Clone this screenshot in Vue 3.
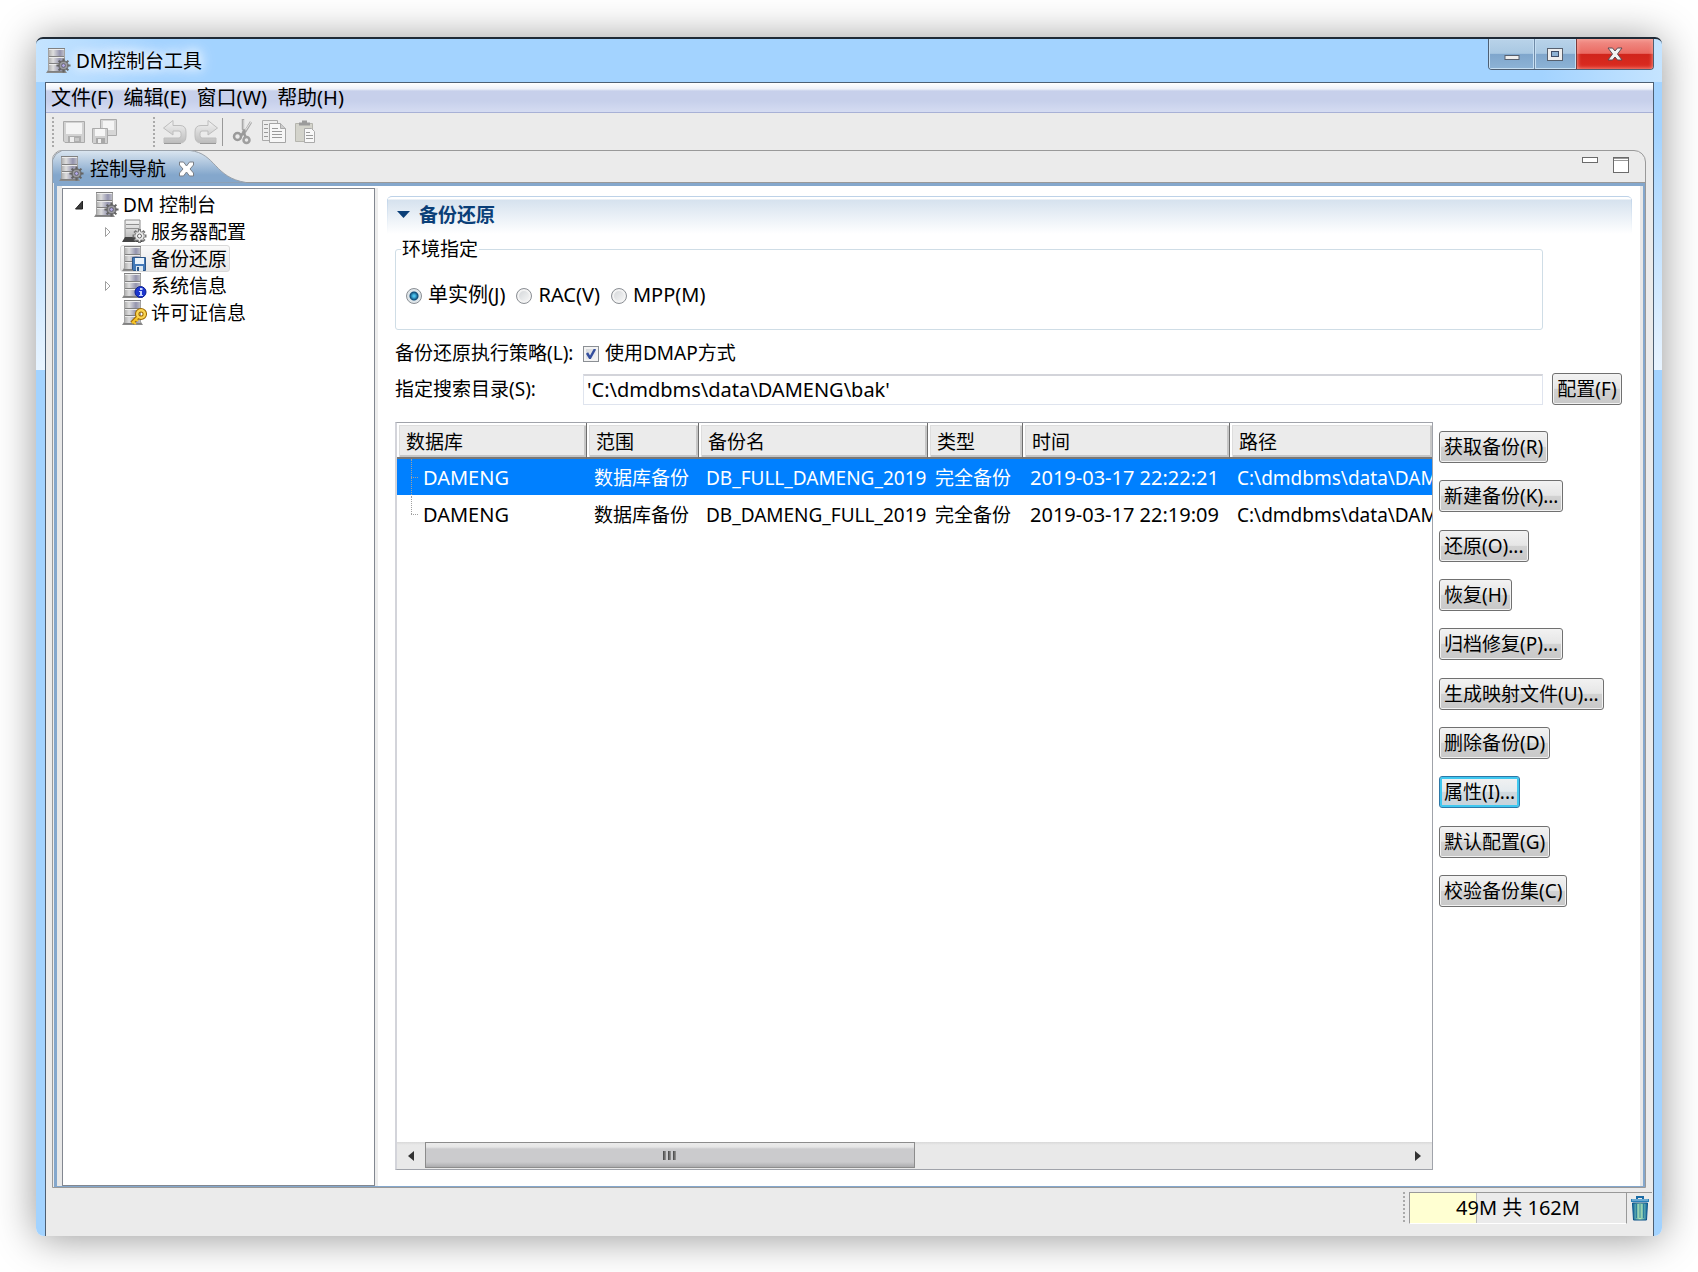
<script setup>
import { ref } from 'vue'

const menus = ['文件(F)', '编辑(E)', '窗口(W)', '帮助(H)']

const tree = [
  { label: 'DM 控制台', icon: 'server-gear', level: 0, state: 'open' },
  { label: '服务器配置', icon: 'server-config', level: 1, state: 'closed' },
  { label: '备份还原', icon: 'server-disk', level: 1, state: 'leaf', selected: true },
  { label: '系统信息', icon: 'server-info', level: 1, state: 'closed' },
  { label: '许可证信息', icon: 'server-key', level: 1, state: 'leaf' },
]

const environments = [
  { value: 'single', label: '单实例(J)' },
  { value: 'rac', label: 'RAC(V)' },
  { value: 'mpp', label: 'MPP(M)' },
]
const environment = ref('single')
const useDmap = ref(true)
const searchDir = ref("'C:\\dmdbms\\data\\DAMENG\\bak'")

const columns = [
  { title: '数据库', cls: 'c-db' },
  { title: '范围', cls: 'c-scope' },
  { title: '备份名', cls: 'c-name' },
  { title: '类型', cls: 'c-type' },
  { title: '时间', cls: 'c-time' },
  { title: '路径', cls: 'c-path' },
]
const rows = [
  { db: 'DAMENG', scope: '数据库备份', name: 'DB_FULL_DAMENG_2019', type: '完全备份', time: '2019-03-17 22:22:21', path: 'C:\\dmdbms\\data\\DAM' },
  { db: 'DAMENG', scope: '数据库备份', name: 'DB_DAMENG_FULL_2019', type: '完全备份', time: '2019-03-17 22:19:09', path: 'C:\\dmdbms\\data\\DAM' },
]
const selectedRow = ref(0)

const actions = [
  '获取备份(R)', '新建备份(K)...', '还原(O)...', '恢复(H)', '归档修复(P)...',
  '生成映射文件(U)...', '删除备份(D)', '属性(I)...', '默认配置(G)', '校验备份集(C)',
]
const focusedAction = '属性(I)...'
</script>

<template>
  <div class="desktop">
    <svg class="sprite" aria-hidden="true">
      <defs>
        <linearGradient id="metal" x1="0" x2="1">
          <stop offset="0" stop-color="#a8a8a8" />
          <stop offset=".3" stop-color="#dedede" />
          <stop offset=".7" stop-color="#9494ae" />
          <stop offset="1" stop-color="#c6c6cc" />
        </linearGradient>
        <linearGradient id="grayDown" x1="0" y1="0" x2="0" y2="1">
          <stop offset="0" stop-color="#f4f4f4" />
          <stop offset="1" stop-color="#bcbcbc" />
        </linearGradient>
        <linearGradient id="tabFill" x1="0" y1="0" x2="0" y2="1">
          <stop offset="0" stop-color="#dbe6f0" />
          <stop offset=".75" stop-color="#84a7cc" />
          <stop offset="1" stop-color="#84a7cc" />
        </linearGradient>
        <linearGradient id="binFill" x1="0" x2="1">
          <stop offset="0" stop-color="#0d6aa4" />
          <stop offset=".5" stop-color="#b9ecb4" />
          <stop offset="1" stop-color="#0d6aa4" />
        </linearGradient>
      </defs>
      <symbol id="server" viewBox="0 0 24 25">
        <path d="M2 22h17l2 3H0z" fill="#8a8a8a" />
        <rect x="2" y="1" width="17" height="7" fill="url(#metal)" />
        <rect x="2" y="9" width="17" height="6" fill="url(#metal)" />
        <rect x="2" y="16" width="17" height="7" fill="url(#metal)" />
        <path d="M2 1.500h17M2 9.500h17M2 16.500h17" stroke="#ececec" />
        <path d="M2 .500h17M2 8.500h17M2 15.500h17M2 23.500h17" stroke="#808080" />
        <path d="M2.500 1v22M18.500 1v22" stroke="#a2a2a2" />
      </symbol>
      <symbol id="gear" viewBox="-8 -8 16 16">
        <circle r="5" fill="#8c8c8c" stroke="#5f5f5f" />
        <path d="M0-7.500V7.500M-7.500 0H7.500M-5.200-5.200 5.200 5.200M5.200-5.200-5.200 5.200" stroke="#636363" stroke-width="2.200" />
        <circle r="4" fill="#9b9ba0" />
        <circle r="2" fill="#b5abec" stroke="#5f5f6c" />
      </symbol>
      <symbol id="server-gear" viewBox="0 0 25 25">
        <use href="#server" width="24" height="25" />
        <use href="#gear" x="10" y="10" width="15" height="15" />
      </symbol>
      <symbol id="server-config" viewBox="0 0 25 25">
        <path d="M3 1h15v18H3z" fill="url(#grayDown)" stroke="#8a8a8a" />
        <path d="M4 5.500h13M4 9.500h13" stroke="#909090" />
        <path d="M3 18h15l3 5H0z" fill="#444" />
        <g transform="translate(17.500 17)">
          <path d="M0-7V7M-7 0H7M-5-5 5 5M5-5-5 5" stroke="#777" stroke-width="3" />
          <circle r="4.500" fill="#ededed" stroke="#888" />
          <path d="M0-5.500V5.500M-5.500 0H5.500M-4-4 4 4M4-4-4 4" stroke="#ededed" />
          <circle r="2" fill="#fff" stroke="#666" />
        </g>
      </symbol>
      <symbol id="server-disk" viewBox="0 0 25 25">
        <use href="#server" width="24" height="25" />
        <path d="M10.500 11.500h13v13h-12l-1-1z" fill="#4379b8" stroke="#2c5688" />
        <path d="M13 12h9v6h-9z" fill="#eaf3fb" />
        <path d="M14 20h7v5h-7z" fill="#dbe8f2" />
        <path d="M15 21h2v4h-2z" fill="#2c5688" />
      </symbol>
      <symbol id="server-info" viewBox="0 0 25 25">
        <use href="#server" width="24" height="25" />
        <circle cx="18.500" cy="19" r="5.500" fill="#1c36cf" stroke="#0b1f8f" />
        <path d="M18 15h2.500v2H18zM17 18h3v4h1v1h-4v-1h1v-3h-1z" fill="#c9d6ff" />
      </symbol>
      <symbol id="server-key" viewBox="0 0 25 25">
        <use href="#server" width="24" height="25" />
        <path d="m17 16-7 7" stroke="#a06a00" stroke-width="4.500" />
        <circle cx="19" cy="14" r="3.800" fill="none" stroke="#a06a00" stroke-width="4.500" />
        <path d="m17 16-7 7m1-1 3 2m-1-5 3 2" stroke="#f7c52a" stroke-width="2" />
        <circle cx="19" cy="14" r="3.800" fill="none" stroke="#fbd653" stroke-width="2.400" />
      </symbol>
    </svg>

    <div class="window">
      <header class="titlebar">
        <svg class="ico"><use href="#server-gear" /></svg>
        <h1>DM控制台工具</h1>
        <div class="winbtns">
          <button class="wb wb-min" aria-label="最小化">
            <svg width="16" height="8"><rect x="1" y="1.500" width="14" height="4" fill="#eee" stroke="#57606e" /></svg>
          </button>
          <button class="wb wb-max" aria-label="最大化">
            <svg width="17" height="15"><rect x=".5" y="1.500" width="15" height="12" fill="#eee" stroke="#57606e" /><rect x="4.500" y="4.500" width="7" height="5" fill="#8eb2d3" stroke="#3f4d66" /></svg>
          </button>
          <button class="wb wb-close" aria-label="关闭">
            <svg width="16" height="14"><path d="M1 1h4.500L8 4l2.500-3H15l-4.500 6 4.500 6h-4.500L8 10l-2.500 3H1l4.500-6z" fill="#f1f1f1" stroke="#5c4a52" /></svg>
          </button>
        </div>
      </header>

      <div class="client">
        <nav class="menubar">
          <a v-for="m in menus" :key="m" href="#">{{ m }}</a>
        </nav>

        <div class="toolbar">
          <i class="handle"></i>
          <button aria-label="保存">
            <svg width="24" height="24"><path d="M1.500 1.500h21v21H3l-1.500-1.500z" fill="#d2d2d2" stroke="#aaa" /><path d="M4 3h16v11H4z" fill="#f4f4f4" /><path d="M6 16h13v6H6z" fill="#aeaeae" /><path d="M8 17h4v5H8z" fill="#eee" /><path d="M13 18h4v3h-4z" fill="#c8c8c8" /></svg>
          </button>
          <button aria-label="全部保存">
            <svg width="28" height="27"><g><path d="M9.500 1.500h16v16h-16z" fill="#d6d6d6" stroke="#aaa" /><path d="M12 3h11v9H12z" fill="#f4f4f4" /></g><path d="M1.500 10.500h15v15h-14l-1-1z" fill="#cfcfcf" stroke="#aaa" /><path d="M4 11h10v7H4z" fill="#f6f6f6" /><path d="M5 20h9v5H5z" fill="#a8a8a8" /><path d="M7 21h3v4H7z" fill="#eee" /></svg>
          </button>
          <i class="handle far"></i>
          <button aria-label="撤销">
            <svg width="26" height="26"><path d="M1.500 9 11 1.500v5h7q6 0 6 6.500v4q0 7-6 7H2v-5h15q2 0 2-2.500v-2q0-2.500-2-2.500h-6v4z" fill="url(#grayDown)" stroke="#bdbdbd" /><path d="M2 24.500h17" stroke="#999" /></svg>
          </button>
          <button aria-label="重做">
            <svg width="26" height="26"><path d="M24.500 9 15 1.500v5H8q-6 0-6 6.500v4q0 7 6 7h15v-5H9q-2 0-2-2.500v-2Q7 12 9 12h6v4z" fill="url(#grayDown)" stroke="#bdbdbd" /><path d="M7 24.500h16" stroke="#999" /></svg>
          </button>
          <i class="sep"></i>
          <button aria-label="剪切">
            <svg width="22" height="27"><path d="M11 1v10l2 3L19 4" fill="none" stroke="#a9a9a9" stroke-width="2.500" /><path d="M12 2v9M19 4l-6 9" stroke="#e8e8e8" /><path d="m13 12-4 6M11 13l3 7" stroke="#9a9a9a" stroke-width="2.500" /><circle cx="5.500" cy="18.500" r="3.500" fill="none" stroke="#9a9a9a" stroke-width="2.500" /><circle cx="14.500" cy="22" r="3" fill="none" stroke="#9f9f9f" stroke-width="2.500" /></svg>
          </button>
          <button aria-label="复制">
            <svg width="26" height="25"><path d="M1.500 1.500h15v20h-15z" fill="#eee" stroke="#aaa" /><path d="M3 5.500h4M3 9.500h4M3 13.500h4M3 17.500h4" stroke="#999" /><path d="M8.500 4.500h11l5 5v14h-16z" fill="#f7f7f7" stroke="#a5a5a5" /><path d="M19.500 4.500v5h5" fill="#ccc" stroke="#aaa" /><path d="M11 9.500h6M11 12.500h10M11 15.500h10M11 18.500h10" stroke="#9a9a9a" /></svg>
          </button>
          <button aria-label="粘贴">
            <svg width="22" height="25"><path d="M1.500 4.500h17v18h-17z" fill="#d3d3cb" stroke="#b5b5ae" /><path d="M5 6.500V3.500h3v-2h5v2h3v3z" fill="#9b9b9b" /><path d="M10.500 9.500h7l3 3v11h-10z" fill="#f8f8f8" stroke="#aaa" /><path d="M12 13.500h4M12 16.500h7M12 19.500h7" stroke="#9a9a9a" /></svg>
          </button>
        </div>

        <main class="folder">
          <div class="folder-head">
            <div class="tab">
              <svg class="tab-shape" viewBox="0 0 194 33" preserveAspectRatio="none"><path d="M0 33V10L3 4 10 .500h128c26 3 24 27 56 32z" fill="url(#tabFill)" /><path d="M.500 33V10L4 4l6-3.500h128c26 3 24 27 56 32" fill="none" stroke="#9aa2ab" /></svg>
              <svg class="ico"><use href="#server-gear" /></svg>
              <span>控制导航</span>
              <button aria-label="关闭标签">
                <svg width="17" height="16"><path d="M1.500 1h4l3 4 3-4h4v3l-3.500 4 3.500 4v3h-4l-3-4-3 4h-4v-3L5 8 1.500 4z" fill="#fff" stroke="#7a7f86" /></svg>
              </button>
            </div>
            <div class="folder-tools">
              <button aria-label="最小化视图"><svg width="16" height="16"><rect x=".5" y=".5" width="15" height="5" fill="#fff" stroke="#6b6b6b" /></svg></button>
              <button aria-label="最大化视图"><svg width="16" height="16"><rect x=".5" y=".5" width="15" height="15" fill="#fff" stroke="#6b6b6b" /><path d="M1 1.500h14M1 3.500h14" stroke="#999" /></svg></button>
            </div>
          </div>

          <div class="pane">
            <ul class="tree">
              <li v-for="n in tree" :key="n.label" :class="['lv' + n.level]">
                <svg class="twist" width="12" height="12">
                  <path v-if="n.state === 'open'" d="M8.500 2v8h-7z" fill="#3b3b3b" stroke="#222" />
                  <path v-else-if="n.state === 'closed'" d="M3.500 1.500 8 6l-4.500 4.500z" fill="#fff" stroke="#a0a0a0" />
                </svg>
                <span class="node" :class="{ selected: n.selected }">
                  <svg class="ico"><use :href="'#' + n.icon" /></svg>
                  <span>{{ n.label }}</span>
                </span>
              </li>
            </ul>

            <section class="form">
              <h2><svg width="14" height="8"><path d="M0 0h13L6.500 7z" fill="#0b3f78" /></svg>备份还原</h2>

              <div class="body">
                <fieldset>
                  <legend>环境指定</legend>
                  <label v-for="e in environments" :key="e.value">
                    <input v-model="environment" type="radio" name="env" :value="e.value" />{{ e.label }}
                  </label>
                </fieldset>

                <div class="line strategy">
                  <span class="cap">备份还原执行策略(L):</span>
                  <label><input v-model="useDmap" type="checkbox" />使用DMAP方式</label>
                </div>

                <div class="line dir">
                  <label class="cap" for="dir">指定搜索目录(S):</label>
                  <input id="dir" v-model="searchDir" type="text" />
                  <button class="btn">配置(F)</button>
                </div>

                <div class="work">
                  <div class="grid">
                    <table>
                      <thead>
                        <tr><th v-for="c in columns" :key="c.cls" :class="c.cls">{{ c.title }}</th></tr>
                      </thead>
                      <tbody>
                        <tr v-for="(r, i) in rows" :key="i" :class="{ on: i === selectedRow, last: i === rows.length - 1 }" @click="selectedRow = i">
                          <td class="latin first">{{ r.db }}</td>
                          <td>{{ r.scope }}</td>
                          <td>{{ r.name }}</td>
                          <td>{{ r.type }}</td>
                          <td class="latin">{{ r.time }}</td>
                          <td>{{ r.path }}</td>
                        </tr>
                      </tbody>
                    </table>
                    <div class="hscroll">
                      <button aria-label="向左"><svg width="6" height="10"><path d="M6 0v10L0 5z" fill="#333" /></svg></button>
                      <div class="track"><div class="thumb"><i></i><i></i><i></i></div></div>
                      <button aria-label="向右"><svg width="6" height="10"><path d="M0 0v10l6-5z" fill="#333" /></svg></button>
                    </div>
                  </div>
                  <div class="actions">
                    <button v-for="a in actions" :key="a" class="btn" :class="{ focused: a === focusedAction }">{{ a }}</button>
                  </div>
                </div>
              </div>
            </section>
          </div>
        </main>

        <footer class="status">
          <i class="handle"></i>
          <div class="heap"><span>49M 共 162M</span></div>
          <button aria-label="回收内存">
            <svg width="20" height="25"><path d="M7 3V1h6v2" fill="none" stroke="#1a6ba5" stroke-width="2" /><path d="M1 3h18v3H1z" fill="#2b7fb8" /><path d="M2 4h16" stroke="#a6d4ea" /><path d="M2.500 7h15l-1 17h-13z" fill="url(#binFill)" stroke="#0b5288" /><path d="M6.500 8v14M10 8v14M13.500 8v14" stroke="#2a7f9f" /></svg>
          </button>
        </footer>
      </div>
    </div>
  </div>
</template>

<style>
body {
  margin: 0;
  background: #fff;
}
</style>

<style scoped>
* {
  box-sizing: border-box;
}
.desktop {
  min-height: 100vh;
  padding: 37px 36px 36px;
  display: flex;
  overflow: hidden;
  font: 19px/26px "Noto Sans", "Noto Sans CJK SC", sans-serif;
  color: #000;
}
.sprite {
  position: absolute;
  width: 0;
  height: 0;
}
button {
  font: inherit;
  color: inherit;
  padding: 0;
  border: 0;
  background: none;
  display: flex;
  align-items: center;
  justify-content: center;
}
svg {
  flex: none;
  display: block;
}
.ico {
  width: 25px;
  height: 25px;
}

/* window frame */
.window {
  flex: 1;
  min-width: 0;
  display: flex;
  flex-direction: column;
  padding: 0 8px 0 9px;
  border-top: 2px solid #1f2a36;
  border-radius: 7px 7px 8px 8px;
  background:
    linear-gradient(90deg, #c5e4ff, #a3d3ff00 120px, #a3d3ff00 calc(100% - 120px), #c5e4ff) 0 0 / 100% 43px no-repeat,
    linear-gradient(#a3d3ff 0 90px, #e8f4ff 331px, #a3d3ff 331px);
  box-shadow: 0 2px 40px rgba(0, 0, 0, 0.42);
}
.titlebar {
  height: 43px;
  display: flex;
  align-items: center;
}
.titlebar .ico {
  margin-left: 1px;
}
h1 {
  margin: 0 0 0 5px;
  font-size: 19px;
  font-weight: 400;
  text-shadow: 0 0 10px #fff, 0 0 14px #fff, 0 0 18px #fff;
}
.winbtns {
  margin-left: auto;
  align-self: flex-start;
  display: flex;
  height: 31px;
  border: 1px solid #4e5f73;
  border-top: 0;
  border-radius: 0 0 4px 4px;
  overflow: hidden;
}
.wb {
  width: 45px;
  background: linear-gradient(#b9d3e9, #a9c8e2 48%, #7fa6cc 50%, #8db3d6);
  box-shadow: inset 0 0 0 1px #c6dff3;
}
.wb-max {
  width: 42px;
  border-left: 1px solid #6f8ba8;
}
.wb-min svg {
  margin-top: 8px;
}
.wb-close {
  width: 77px;
  border-left: 1px solid #7b3a3a;
  background: linear-gradient(#f1918a, #ea6a62 48%, #d0241b 50%, #dc2c20);
  box-shadow: inset 0 0 4px #f9b0a4;
}
.client {
  flex: 1;
  display: flex;
  flex-direction: column;
  background: #ebebeb;
  border: 1px solid #4d5f73;
  border-bottom: 0;
}

/* menu and toolbar */
.menubar {
  height: 30px;
  display: flex;
  gap: 10px;
  padding-left: 5px;
  align-items: center;
  font-size: 20px;
  border-bottom: 1px solid #a8b1d6;
  background: linear-gradient(#fff, #eef1f9 6px, #c7d0eb 8px, #c7d0eb 18px, #d5dcf2);
}
.menubar a {
  color: #000;
  text-decoration: none;
}
.toolbar {
  height: 37px;
  display: flex;
  align-items: center;
  padding-left: 6px;
}
.toolbar button {
  width: 31px;
}
.handle {
  width: 2px;
  height: 30px;
  margin-right: 4px;
  background: repeating-linear-gradient(#aaa 0 2px, #ebebeb 2px 4px);
}
.far {
  margin-left: 33px;
}
.sep {
  width: 1px;
  height: 28px;
  margin: 0 4px 0 1px;
  background: #999;
}

/* tab folder */
.folder {
  flex: 1;
  display: flex;
  flex-direction: column;
  margin: 0 7px 0 6px;
  border: 1px solid #999;
  border-radius: 10px 12px 0 0;
}
.folder-head {
  height: 32px;
  display: flex;
  justify-content: space-between;
  border-bottom: 1px solid #999;
}
.tab {
  position: relative;
  width: 194px;
  height: 33px;
  margin: -1px 0 0 -1px;
  padding: 4px 0 0 7px;
  display: flex;
  align-items: center;
  gap: 6px;
}
.tab > * {
  position: relative;
}
.tab .tab-shape {
  position: absolute;
  inset: 0;
  width: 100%;
  height: 100%;
}
.tab button {
  margin-left: 6px;
}
.folder-tools {
  display: flex;
  gap: 15px;
  align-items: flex-start;
  padding: 6px 16px 0 0;
}
.pane {
  flex: 1;
  display: flex;
  margin-left: 1px;
  border: solid #84a7cc;
  border-width: 3px 2px 1px 3px;
  background: linear-gradient(90deg, #e8e8e8 5px, #fff 5px calc(100% - 3px), #e8e8e8 calc(100% - 3px));
}
.tree {
  width: 313px;
  margin: 2px 0 0 5px;
  padding: 2px 0;
  list-style: none;
  border: 1px solid #828790;
  background: #fff;
  box-shadow: 3px 0 #ededed;
}
.tree li {
  display: flex;
  align-items: center;
  height: 27px;
  padding-left: 11px;
}
.tree .lv1 {
  padding-left: 39px;
}
.twist {
  margin-right: 6px;
}
.node {
  display: flex;
  gap: 4px;
  align-items: center;
  height: 27px;
  padding: 0 2px 0 1px;
  border: 1px solid transparent;
}
.node.selected {
  border-color: #d9d9d9;
  border-radius: 3px;
  background: linear-gradient(#fafafa, #e6e6e6);
}

/* form */
.form {
  flex: 1;
  min-width: 0;
  display: flex;
  flex-direction: column;
  margin: 10px 11px 0 12px;
}
h2 {
  height: 38px;
  margin: 0;
  padding: 0 0 2px 10px;
  display: flex;
  align-items: center;
  gap: 8px;
  font-size: 19px;
  font-weight: 700;
  color: #0b3f78;
  border-radius: 5px 5px 0 0;
  border-top: 1px solid #bdd2e8;
  background:
    linear-gradient(#bdd2e8, #fff) 0 0 / 1px 100% no-repeat,
    linear-gradient(#bdd2e8, #fff) 100% 0 / 1px 100% no-repeat,
    linear-gradient(#fff 2px, #d6e2ee 3px, #fff);
}
.body {
  flex: 1;
  display: flex;
  flex-direction: column;
  padding: 2px 10px 16px 8px;
}
fieldset {
  height: 94px;
  margin: 0 79px 0 0;
  padding: 20px 10px 0;
  border: 1px solid #cfdde6;
  border-radius: 3px;
}
legend {
  padding: 0 1px;
  margin-left: -5px;
}
fieldset label {
  margin-right: 11px;
  font-size: 20px;
}
input[type="radio"],
input[type="checkbox"] {
  appearance: none;
  width: 16px;
  height: 16px;
  margin: 0 6px 0 0;
  vertical-align: -2px;
  border: 1px solid #8b8f94;
  background: linear-gradient(135deg, #d0d3d6, #fafafa);
  box-shadow: inset 0 0 0 2px #f3f3f3;
}
input[type="radio"] {
  border-radius: 50%;
}
input[type="radio"]:checked {
  background: radial-gradient(circle at 50% 50%, #4cc3ee 0 1px, #0d4a77 4px, #dfe6ea 5px);
  box-shadow: none;
}
input[type="checkbox"]:checked {
  background:
    url("data:image/svg+xml,%3Csvg xmlns='http://www.w3.org/2000/svg' width='14' height='14'%3E%3Cpath d='M3 6l3 5 5-9' fill='none' stroke='%23354f9e' stroke-width='2.500'/%3E%3C/svg%3E"),
    linear-gradient(135deg, #d0d3d6, #fafafa);
}
.line {
  display: flex;
  align-items: center;
}
.strategy {
  height: 26px;
  margin-top: 10px;
}
.cap {
  width: 188px;
}
.dir {
  margin-top: 7px;
}
.dir input {
  flex: 1;
  min-width: 0;
  height: 31px;
  padding: 0 3px;
  font: inherit;
  color: inherit;
  font-size: 20px;
  border: 1px solid #dfe4ee;
  border-top: 2px solid #d3d4da;
  outline: 0;
}
.btn {
  height: 32px;
  padding: 0 4px;
  border: 1px solid #707070;
  border-radius: 3px;
  background: linear-gradient(#f2f2f2, #e6e6e6 48%, #d2d2d2 50%, #c8c8c8);
  box-shadow: inset 0 0 0 1px #f2f2f2;
  white-space: nowrap;
}
.btn.focused {
  border-color: #2d78a8;
  background: linear-gradient(#f2f2f2, #e4eaee 48%, #d0d9df 50%, #c6d2da);
  box-shadow: inset 0 0 0 2px #3fc8f0;
}
.dir .btn {
  width: 70px;
  margin-left: 9px;
}

/* backup table */
.work {
  flex: 1;
  display: flex;
  margin-top: 17px;
}
.grid {
  flex: 1;
  min-width: 0;
  display: flex;
  flex-direction: column;
  justify-content: space-between;
  border: 1px solid #a0a3aa;
  border-left: 2px solid #d3d4da;
  background: #fff;
}
table {
  width: 100%;
  table-layout: fixed;
  border-collapse: separate;
  border-spacing: 0;
}
th {
  height: 36px;
  padding: 4px 0 0 9px;
  text-align: left;
  font-weight: 400;
  background: #ebebeb;
  border-right: 1px solid #6d6d6d;
  border-bottom: 2px solid #777;
  box-shadow: inset 2px 2px #fff, inset 3px 3px #ddd, inset -2px -2px #c6c6c6;
}
th:last-child {
  border-right: 0;
}
.c-db { width: 190px; }
.c-scope { width: 112px; }
.c-name { width: 229px; }
.c-type { width: 95px; }
.c-time { width: 207px; }
td {
  height: 37px;
  padding: 2px 0 0 7px;
  border-bottom: 1px solid #fff;
  white-space: nowrap;
  overflow: hidden;
}
.latin {
  font-size: 20px;
}
.on td {
  color: #fff;
  background: #0080ff padding-box;
}
.first {
  position: relative;
  padding-left: 26px;
}
.first::before,
.first::after {
  content: "";
  position: absolute;
  left: 14px;
  top: 0;
  height: 100%;
  border-left: 1px dotted #a0a0a0;
}
.first::after {
  top: 50%;
  width: 7px;
  height: 0;
  border-left: 0;
  border-top: 1px dotted #a0a0a0;
}
.last .first::before {
  height: 50%;
}
.hscroll {
  display: flex;
  height: 27px;
  background: linear-gradient(#d9d9d9, #e9e9e9 3px, #e9e9e9);
}
.hscroll button {
  width: 28px;
}
.track {
  flex: 1;
}
.thumb {
  width: 50%;
  height: 26px;
  display: flex;
  gap: 2px;
  align-items: center;
  justify-content: center;
  border: 1px solid #8c8c8c;
  background: linear-gradient(#ebebeb, #e6e6e6 4px, #cbcbcd 6px, #cbcbcd 19px, #ababad);
}
.thumb i {
  width: 3px;
  height: 9px;
  background: linear-gradient(90deg, #444, #999);
}
.actions {
  width: 189px;
  height: 476px;
  margin-top: 9px;
  padding-left: 6px;
  display: flex;
  flex-direction: column;
  align-items: flex-start;
  justify-content: space-between;
}

/* status bar */
.status {
  height: 48px;
  padding: 4px 1px 12px 0;
  display: flex;
  justify-content: flex-end;
}
.heap {
  width: 218px;
  border: 1px solid #999;
  border-bottom-color: #fff;
  display: flex;
  align-items: center;
  justify-content: center;
  font-size: 20px;
  background: linear-gradient(90deg, #ffffd2 0 66px, #bbb 66px 67px, #ebebeb 67px);
}
.status button {
  width: 25px;
  border-top: 1px solid #999;
}
</style>
